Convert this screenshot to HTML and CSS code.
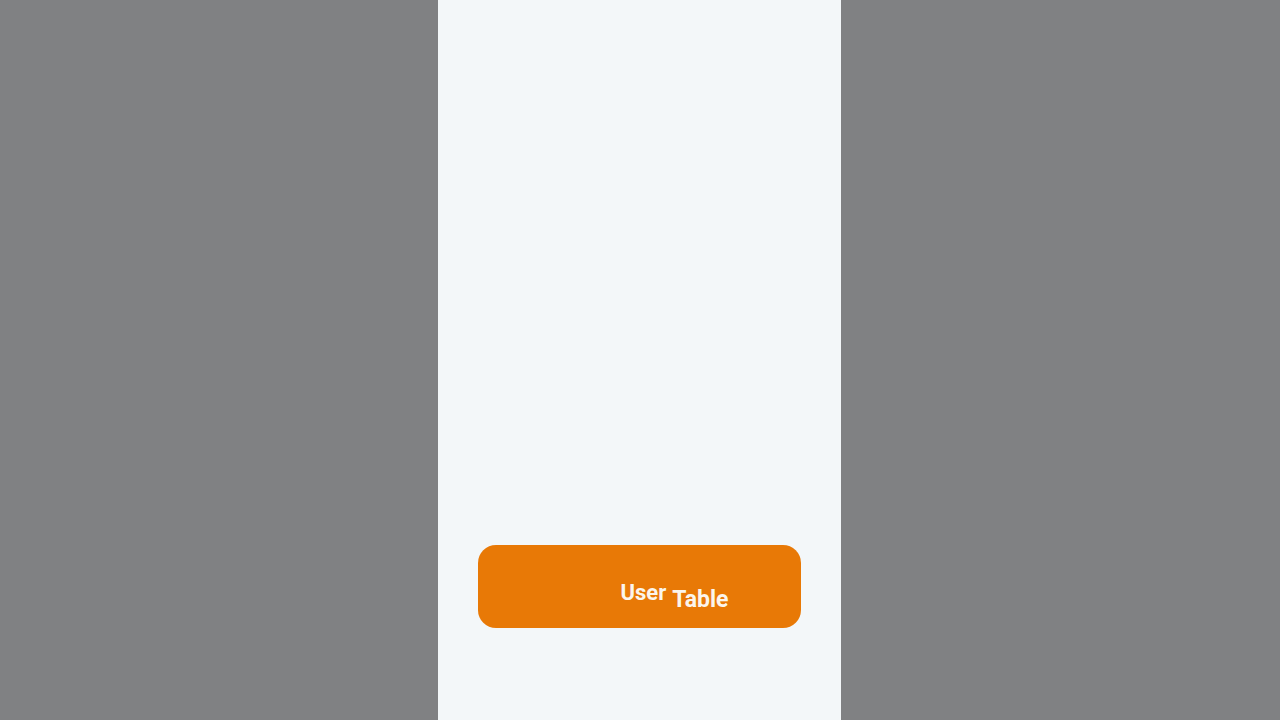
FILE: index.html
```html
<!DOCTYPE html>
<html lang="en">
<head>
    <meta charset="UTF-8">
    <meta name="viewport" content="width=device-width, initial-scale=1.0">
    <title>User Table</title>
    <link rel="stylesheet" href="styles.css">
</head>
<body>
    <div class="screen">
        <button class="cta">
            <span class="cta-small">User</span>
            <span class="cta-big">Table</span>
        </button>
    </div>
</body>
</html>
```

FILE: styles.css
```css
* {
    margin: 0;
    padding: 0;
    box-sizing: border-box;
}

body {
    font-family: Roboto, "Liberation Sans", sans-serif;
    background: #808183;
    height: 100vh;
    display: flex;
    overflow: hidden;
}

.screen {
    width: 403px;
    height: 720px;
    margin-left: 438px;
    background: #f3f7f9;
    display: flex;
    flex-direction: column;
    justify-content: flex-end;
    padding: 0 40px 92px;
}

.cta {
    height: 83px;
    width: 100%;
    border: none;
    border-radius: 18px;
    background: #e87906;
    color: #fbf5ec;
    font-family: Roboto, "Liberation Sans", sans-serif;
    font-weight: 700;
    display: flex;
    justify-content: center;
    align-items: flex-start;
    gap: 6px;
    padding: 35px 0 0 70px;
}

.cta-small {
    font-size: 22px;
    line-height: 25px;
}

.cta-big {
    font-size: 23px;
    line-height: 26px;
    margin-top: 7px;
}
```
